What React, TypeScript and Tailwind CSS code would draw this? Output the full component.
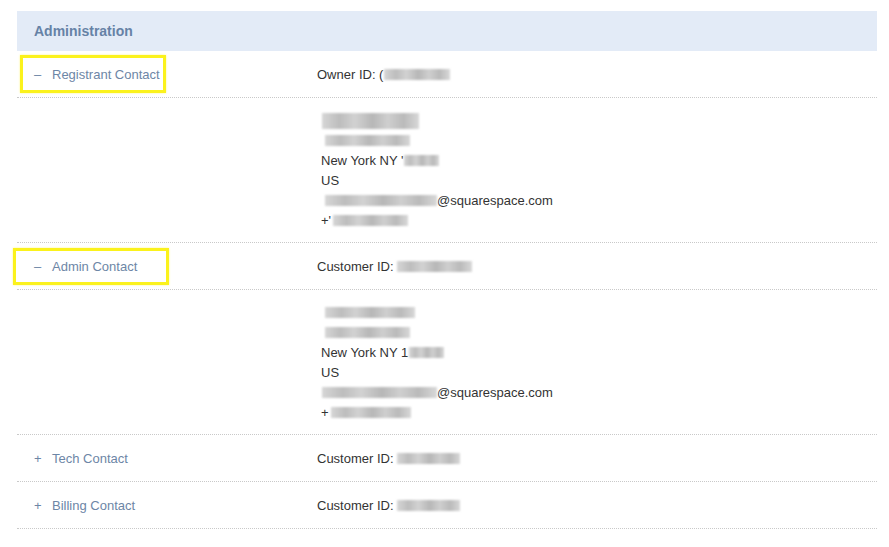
import React from 'react';

// pixelated / redacted text stand-in
function Blur({ className = '' }: { className?: string }) {
  return (
    <span
      className={
        'inline-block h-[11px] align-[-1px] blur-[1px] bg-[linear-gradient(90deg,#d6d6d6_0%,#bdbdbd_18%,#d2d2d2_34%,#b7b7b7_52%,#cfcfcf_68%,#bababa_84%,#d8d8d8_100%)] ' +
        className
      }
    />
  );
}

function Highlight({ className }: { className: string }) {
  return (
    <div
      className={
        'absolute pointer-events-none border-[3px] border-[#fbf21c] shadow-[0_0_2px_#fff48a] ' + className
      }
    />
  );
}

interface RowProps {
  sign: string;
  label: string;
  children: React.ReactNode;
  highlight?: React.ReactNode;
}

function ContactRow({ sign, label, children, highlight }: RowProps) {
  return (
    <div className="relative flex h-[47px] items-center border-b border-dotted border-[#c9c9c9] pt-[2px]">
      <div className="flex w-[300px] shrink-0 items-center pl-[17px] text-[#6d86a6]">
        <span className="w-[18px]">{sign}</span>
        <span>{label}</span>
      </div>
      <div className="text-[#333]">{children}</div>
      {highlight}
    </div>
  );
}

function Details({ lines }: { lines: React.ReactNode[] }) {
  return (
    <div className="flex h-[145px] border-b border-dotted border-[#c9c9c9] pl-[304px] pt-[13px] text-[#333]">
      <div className="flex flex-col">
        {lines.map((l, i) => (
          <div key={i} className="h-[20px] leading-[20px] whitespace-nowrap">
            {l}
          </div>
        ))}
      </div>
    </div>
  );
}

export default function App() {
  return (
    <div className="min-h-[547px] bg-white pt-[11px] font-['Liberation_Sans',Arial,sans-serif] text-[13px]">
      <div className="ml-[17px] w-[860px]">
        <div className="flex h-[40px] items-center bg-[#e3ebf7] pl-[17px] text-[14px] font-bold text-[#6682a6]">
          Administration
        </div>

        <ContactRow
          sign="–"
          label="Registrant Contact"
          highlight={<Highlight className="left-[3px] top-[4px] h-[38px] w-[146px]" />}
        >
          Owner ID: (<Blur className="ml-[1px] w-[66px]" />
        </ContactRow>
        <Details
          lines={[
            <Blur className="ml-[1px] mt-[2px] h-[16px] w-[97px]" />,
            <Blur className="ml-[4px] w-[85px]" />,
            <>
              New York NY '<Blur className="ml-[1px] w-[35px]" />
            </>,
            <>US</>,
            <>
              <Blur className="ml-[4px] w-[112px]" />@squarespace.com
            </>,
            <>
              +'<Blur className="ml-[2px] w-[75px]" />
            </>,
          ]}
        />

        <ContactRow
          sign="–"
          label="Admin Contact"
          highlight={<Highlight className="-left-[4px] top-[5px] h-[37px] w-[156px]" />}
        >
          Customer ID: <Blur className="w-[75px]" />
        </ContactRow>
        <Details
          lines={[
            <Blur className="ml-[4px] w-[90px]" />,
            <Blur className="ml-[4px] w-[85px]" />,
            <>
              New York NY 1<Blur className="ml-[1px] w-[35px]" />
            </>,
            <>US</>,
            <>
              <Blur className="ml-[1px] w-[115px]" />@squarespace.com
            </>,
            <>
              +<Blur className="ml-[2px] w-[80px]" />
            </>,
          ]}
        />

        <ContactRow sign="+" label="Tech Contact">
          Customer ID: <Blur className="w-[63px]" />
        </ContactRow>
        <ContactRow sign="+" label="Billing Contact">
          Customer ID: <Blur className="w-[63px]" />
        </ContactRow>
      </div>
    </div>
  );
}
